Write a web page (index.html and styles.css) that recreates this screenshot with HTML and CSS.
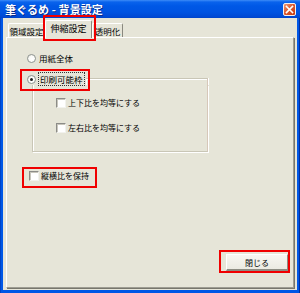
FILE: index.html
```html
<!DOCTYPE html>
<html lang="ja">
<head>
<meta charset="utf-8">
<link rel="stylesheet" href="styles.css">
</head>
<body>
<div class="window">
  <div class="titlebar">
    <span class="title">筆ぐるめ - 背景設定</span>
    <span class="close"><svg width="11" height="11" viewBox="0 0 11 11"><path d="M2.5 2.5 L8.5 8.5 M8.5 2.5 L2.5 8.5" stroke="#fff" stroke-width="1.6" stroke-linecap="square"/></svg></span>
  </div>
  <div class="client">
    <div class="tabs">
      <div class="tab t1">領域設定</div>
      <div class="tab active">伸縮設定</div>
      <div class="tab t3">透明化</div>
    </div>
    <div class="panel">
      <label class="row radio-row first">
        <span class="radio"></span><span class="label">用紙全体</span>
      </label>
      <div class="group">
        <div class="group-head">
          <label class="row legend">
            <span class="radio on"></span><span class="label focus">印刷可能枠</span>
          </label>
          <span class="head-line"></span>
        </div>
        <div class="group-body">
          <label class="row check-row"><span class="check"></span><span class="label">上下比を均等にする</span></label>
          <label class="row check-row second"><span class="check"></span><span class="label">左右比を均等にする</span></label>
        </div>
      </div>
      <label class="row keep-row"><span class="check"></span><span class="label">縦横比を保持</span></label>
      <button class="btn">閉じる</button>
    </div>
  </div>
  <div class="mark mark-tab"></div>
  <div class="mark mark-radio"></div>
  <div class="mark mark-check"></div>
  <div class="mark mark-btn"></div>
</div>
</body>
</html>
```
FILE: styles.css
```css
html, body {
  margin: 0;
  padding: 0;
  background: #0055e5;
}
* { box-sizing: border-box; }

.window {
  position: relative;
  width: 300px;
  height: 293px;
  display: flex;
  flex-direction: column;
  background: linear-gradient(90deg, #0031a8 0, #0057e6 1px, #0057e6 299px, #002f9f 299px);
  padding-bottom: 3px;
  font-family: "Noto Sans CJK JP", "Noto Sans", sans-serif;
  font-size: 8px;
  color: #000;
}

.titlebar {
  height: 18px;
  flex: none;
  display: flex;
  align-items: center;
  justify-content: space-between;
  padding: 0 4px 0 5px;
  background: linear-gradient(#3d8cf7 0, #0a63ec 2px, #0058e6 6px, #0054e2 12px, #0049d3 17px, #0043c8 18px);
}
.title {
  color: #fff;
  font-weight: bold;
  font-size: 11px;
  line-height: 14px;
  text-shadow: 1px 1px 0 #0a2e8c;
  letter-spacing: 0.1px;
}
.close {
  width: 13px;
  height: 13px;
  border: 1px solid #f4f0ee;
  border-radius: 2px;
  background: linear-gradient(135deg, #ef9a78 0, #dc5a30 45%, #c63a0e 100%);
  display: flex;
  align-items: center;
  justify-content: center;
  margin-top: 1px;
}
.close svg { display: block; }

.client {
  flex: 1;
  margin: 0 3px;
  background: #e6e5d8;
  display: flex;
  flex-direction: column;
  padding: 2px 3px 2px 3px;
}

.tabs {
  height: 17px;
  flex: none;
  display: flex;
  align-items: flex-end;
  padding-left: 2px;
  position: relative;
  z-index: 1;
  font-size: 8.5px;
}
.tab {
  height: 14px;
  border-top: 1px solid #fff;
  border-left: 1px solid #fff;
  border-right: 1px solid #8a897f;
  border-radius: 2px 2px 0 0;
  background: #e6e5d8;
  display: flex;
  align-items: center;
  justify-content: center;
  line-height: 12px;
  white-space: nowrap;
  padding-top: 1px;
}
.t1 { width: 37px; }
.t3 { width: 31px; }
.tab.active {
  width: 47px;
  height: 18px;
  margin-bottom: -1px;
  padding-bottom: 3px;
  font-size: 9px;
}

.panel {
  flex: 1;
  border-top: 1px solid #fff;
  border-left: 1px solid #fff;
  border-right: 1px solid #9d9c92;
  border-bottom: 1px solid #9d9c92;
  box-shadow: 1px 1px 0 #77766c;
  display: flex;
  flex-direction: column;
  align-items: flex-start;
  padding-left: 20px;
}

.row {
  display: flex;
  align-items: center;
  height: 12px;
  line-height: 12px;
  white-space: nowrap;
}
.first { margin-top: 14px; }

.radio {
  width: 9px;
  height: 9px;
  border-radius: 50%;
  border: 1px solid #8f9491;
  background: radial-gradient(circle at 60% 60%, #ffffff 0, #fbfbf8 50%, #dcdcd3 100%);
  flex: none;
  display: flex;
  align-items: center;
  justify-content: center;
}
.radio.on::after {
  content: "";
  width: 3px;
  height: 3px;
  border-radius: 50%;
  background: #1d1d1d;
}
.radio + .label { margin-left: 3px; font-size: 8.5px; }

.group {
  margin-top: 9px;
  width: 181px;
}
.group-head {
  display: flex;
  height: 12px;
}
.legend { flex: none; }
.focus {
  outline: 1px dotted #333;
  outline-offset: 0;
  padding: 0 1px;
}
.head-line {
  flex: 1;
  margin-top: 5px;
  margin-left: 2px;
  border-top: 1px solid #c9c6b6;
  border-right: 1px solid #d6c7b9;
  box-shadow: inset 1px 1px 0 #fff, 1px 0 0 #fff;
}
.group-body {
  margin-left: 5px;
  border-left: 1px solid #c9c6b6;
  border-right: 1px solid #d6c7b9;
  border-bottom: 1px solid #c9c6b6;
  box-shadow: inset 1px 0 0 #fff, 1px 1px 0 #fff;
  padding: 12px 0 17px 23px;
}
.second { margin-top: 13px; }

.check {
  width: 10px;
  height: 10px;
  flex: none;
  background: #fff;
  border-top: 1px solid #8c8c88;
  border-left: 1px solid #8c8c88;
  border-bottom: 1px solid #f2f2ee;
  border-right: 1px solid #f2f2ee;
  box-shadow: inset 1px 1px 0 #c8c6bc;
}
.check + .label { margin-left: 2px; }

.keep-row {
  margin-top: 18px;
  margin-left: 2px;
}

.btn {
  margin-top: auto;
  align-self: flex-end;
  margin-right: 5px;
  margin-bottom: 16px;
  width: 62px;
  height: 17px;
  padding: 0;
  font-family: inherit;
  font-size: 8px;
  line-height: 13px;
  color: #000;
  background: linear-gradient(#f7f6f1, #ebeae2);
  border-top: 1px solid #fff;
  border-left: 1px solid #fff;
  border-right: 1px solid #8d8c82;
  border-bottom: 2px solid #8d8c82;
  box-shadow: 1px 1px 0 #b9b7aa;
}

.mark {
  position: absolute;
  border: 2px solid #f00000;
  z-index: 5;
}
.mark-tab { left: 43px; top: 15px; width: 53px; height: 26px; }
.mark-radio { left: 20px; top: 69px; width: 70px; height: 22px; }
.mark-check { left: 22px; top: 167px; width: 75px; height: 21px; }
.mark-btn { left: 219px; top: 250px; width: 71px; height: 23px; }
```
